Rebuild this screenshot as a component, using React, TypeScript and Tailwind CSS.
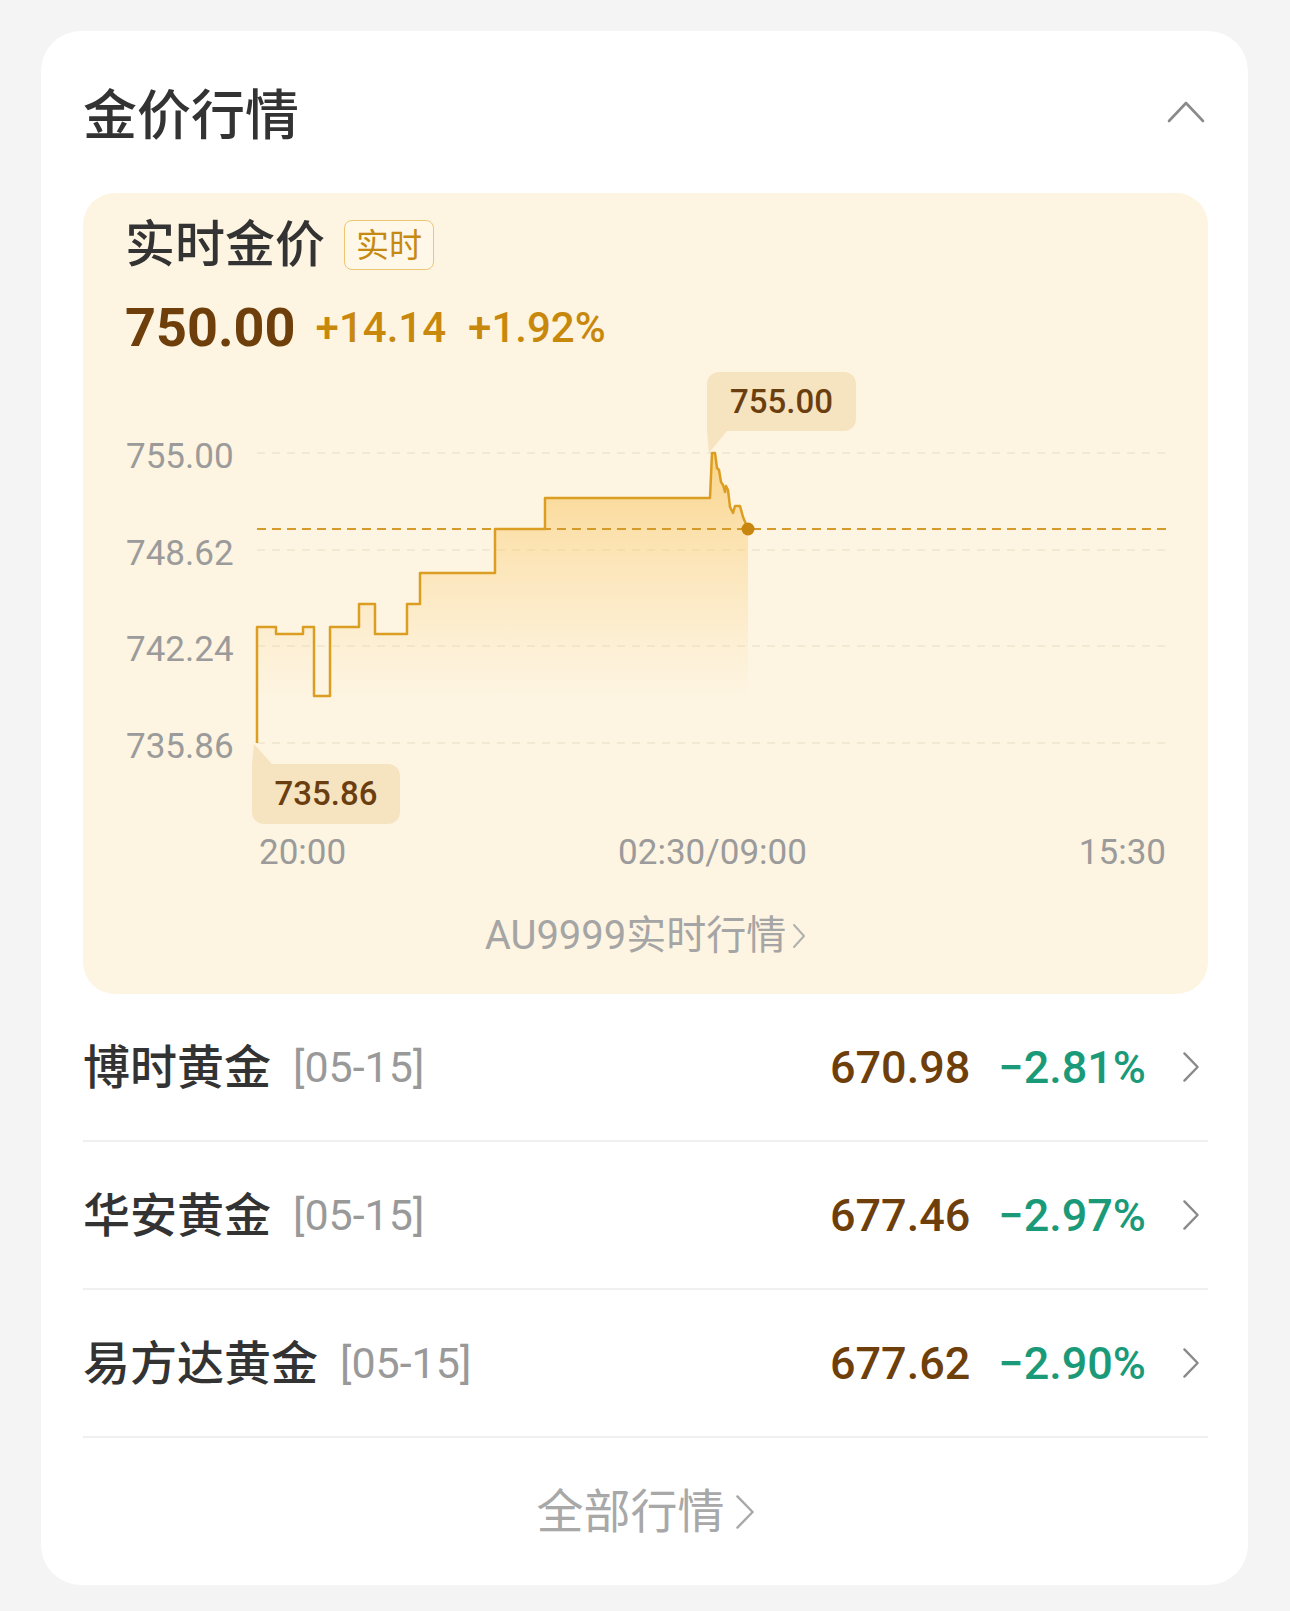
import React from 'react';

const FONT = "font-['Roboto','Noto_Sans_CJK_SC',sans-serif]";

// price path in chart coords (origin at the left edge of the y labels)
const linePoints: [number, number][] = [
  [132, 387], [132, 271], [151, 271], [151, 278], [178, 278], [178, 271],
  [189, 271], [189, 340], [205, 340], [205, 271], [234, 271], [234, 248],
  [250, 248], [250, 278], [282, 278], [282, 248], [295, 248], [295, 217],
  [370, 217], [370, 173], [420, 173], [420, 142], [585, 142], [587, 97],
  [590, 97], [592, 112], [594, 114], [596, 126], [598, 129], [600, 136],
  [601, 130], [603, 134], [605, 151], [608, 157], [610, 150], [615, 150],
  [618, 161], [623, 173],
];

const gridYs = [
  { y: 97, label: '755.00' },
  { y: 194, label: '748.62' },
  { y: 290, label: '742.24' },
  { y: 387, label: '735.86' },
];

const funds = [
  { name: '博时黄金', price: '670.98', pct: '−2.81%' },
  { name: '华安黄金', price: '677.46', pct: '−2.97%' },
  { name: '易方达黄金', price: '677.62', pct: '−2.90%' },
];

function ChevronRight({ w, h, color, stroke }: { w: number; h: number; color: string; stroke: number }) {
  return (
    <svg width={w} height={h} viewBox={`0 0 ${w} ${h}`} fill="none">
      <path
        d={`M${stroke} ${stroke} L${w - stroke} ${h / 2} L${stroke} ${h - stroke}`}
        stroke={color}
        strokeWidth={stroke}
        strokeLinecap="round"
        strokeLinejoin="round"
      />
    </svg>
  );
}

function PriceChart() {
  const line = linePoints.map(([x, y]) => `${x},${y}`).join(' ');
  const area = `${line} 623,387 132,387`;

  return (
    <div className="relative h-[470px] w-[1041px]">
      <svg width={1041} height={470} viewBox="0 0 1041 470" className="block">
        <defs>
          <linearGradient id="fill" x1="0" y1="97" x2="0" y2="340" gradientUnits="userSpaceOnUse">
            <stop offset="0" stopColor="#f9c35a" stopOpacity="0.65" />
            <stop offset="1" stopColor="#fbd48a" stopOpacity="0" />
          </linearGradient>
        </defs>

        {gridYs.map((g) => (
          <g key={g.label}>
            <line x1={132} x2={1041} y1={g.y} y2={g.y} stroke="#efe3cb" strokeWidth={1.5} strokeDasharray="8 7" />
            <text
              x={1}
              y={g.y + 3}
              dominantBaseline="central"
              fill="#9b9b9b"
              fontSize={35}
              fontFamily="Roboto, 'Noto Sans CJK SC', sans-serif"
            >
              {g.label}
            </text>
          </g>
        ))}

        <polygon points={area} fill="url(#fill)" />
        <line x1={132} x2={1041} y1={173} y2={173} stroke="#d59a2a" strokeWidth={2.2} strokeDasharray="9 6" />
        <polyline points={line} fill="none" stroke="#dc9e22" strokeWidth={2.5} strokeLinejoin="round" />
        <circle cx={623} cy={173} r={6.5} fill="#c8860f" />

        {/* tooltip tails */}
        <polygon points="582,75 602,75 584,97" fill="#f6e4c1" />
        <polygon points="127,408 147,408 129,388" fill="#f6e4c1" />
      </svg>

      <div className="absolute left-[582px] top-[16px] flex h-[59px] w-[149px] items-center justify-center rounded-[12px] rounded-bl-none bg-[#f6e4c1] text-[33px] font-medium text-[#6b3e0f]">
        755.00
      </div>
      <div className="absolute left-[127px] top-[408px] flex h-[60px] w-[148px] items-center justify-center rounded-[12px] rounded-tl-none bg-[#f6e4c1] text-[33px] font-medium text-[#6b3e0f]">
        735.86
      </div>
    </div>
  );
}

export default function App() {
  return (
    <div className={`min-h-[1611px] w-[1290px] bg-[#f4f4f4] pt-[31px] ${FONT}`}>
      <div className="ml-[41px] h-[1554px] w-[1207px] rounded-[40px] bg-white pl-[42px] pr-[40px]">
        {/* header */}
        <div className="flex h-[162px] items-center justify-between">
          <h1 className="mt-[10px] text-[54px] font-medium leading-none text-[#333333]">金价行情</h1>
          <svg width={38} height={24} viewBox="0 0 38 24" fill="none" className="mr-[3px]">
            <path d="M2 21 L19 3 L36 21" stroke="#8a8a8a" strokeWidth={2.6} strokeLinecap="round" strokeLinejoin="round" />
          </svg>
        </div>

        {/* realtime panel */}
        <div className="h-[801px] rounded-[32px] bg-[#fdf4e1] px-[42px] pt-[27px]">
          <div className="flex h-[50px] items-center">
            <span className="text-[50px] font-medium leading-none text-[#333333]">实时金价</span>
            <span className="ml-[19px] flex h-[50px] w-[90px] items-center justify-center rounded-[8px] border border-[#ebc774] bg-[#fff8e8] text-[33px] leading-none text-[#c68912]">
              实时
            </span>
          </div>

          <div className="mt-[30px] flex h-[56px] items-center">
            <span className="text-[54px] font-bold leading-none text-[#6e3f0a]">750.00</span>
            <span className="ml-[20px] text-[42px] font-medium leading-none text-[#c8880c]">+14.14</span>
            <span className="ml-[22px] text-[42px] font-medium leading-none text-[#c8880c]">+1.92%</span>
          </div>

          <PriceChart />

          <div className="flex h-[54px] items-center justify-between pl-[134px] text-[35px] text-[#9b9b9b]">
            <span>20:00</span>
            <span>02:30/09:00</span>
            <span>15:30</span>
          </div>

          <div className="mt-[31px] flex h-[50px] items-center justify-center gap-[6px] text-[40px] text-[#a5a5a5]">
            <span>AU9999实时行情</span>
            <ChevronRight w={14} h={26} color="#b0b0b0" stroke={2} />
          </div>
        </div>

        {/* fund list */}
        {funds.map((f) => (
          <div key={f.name} className="flex h-[148px] items-center border-b-2 border-[#f0f0f0]">
            <span className="text-[47px] font-medium leading-none text-[#333333]">{f.name}</span>
            <span className="ml-[22px] text-[43px] leading-none text-[#999999]">[05-15]</span>
            <span className="ml-auto text-[45px] font-medium leading-none text-[#6e3f0a]">{f.price}</span>
            <span className="ml-[28px] text-[45px] font-medium leading-none text-[#1a9a78]">{f.pct}</span>
            <span className="ml-[36px] mr-[8px]">
              <ChevronRight w={18} h={32} color="#8a8a8a" stroke={2.4} />
            </span>
          </div>
        ))}

        <div className="flex h-[148px] items-center justify-center gap-[10px] text-[47px] text-[#a8a8a8]">
          <span>全部行情</span>
          <ChevronRight w={20} h={36} color="#a8a8a8" stroke={2.4} />
        </div>
      </div>
    </div>
  );
}
